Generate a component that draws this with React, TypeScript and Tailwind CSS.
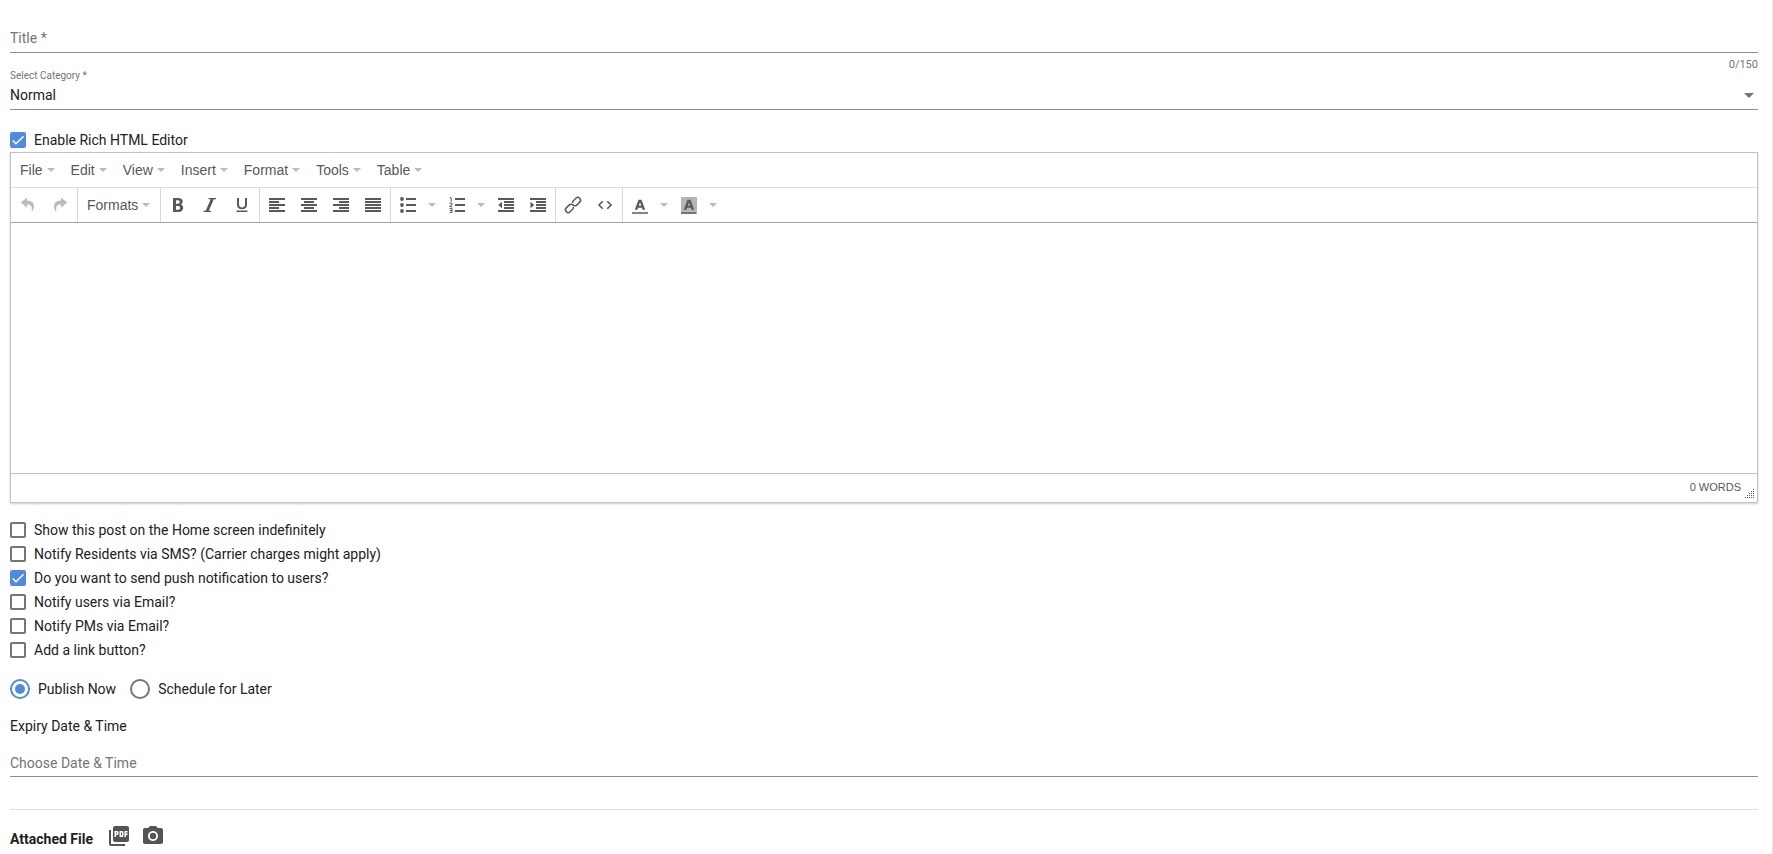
import { useState } from 'react';
import type { ReactNode } from 'react';
import { MdPhotoCamera, MdPictureAsPdf } from 'react-icons/md';

function Caret() {
  return (
    <svg viewBox="0 0 8 4" className="h-1 w-2 fill-[#b5bcc2]" aria-hidden="true">
      <path d="M0 0h8L4 4z" />
    </svg>
  );
}

function Glyph({ children }: { children: ReactNode }) {
  return (
    <svg viewBox="0 0 16 16" className="h-4 w-4 overflow-visible fill-[#595959]" aria-hidden="true">
      {children}
    </svg>
  );
}

function ToolButton({ label, dim = false, children }: { label: string; dim?: boolean; children: ReactNode }) {
  return (
    <button
      type="button"
      aria-label={label}
      disabled={dim}
      className={`flex h-8 w-8 items-center justify-center ${dim ? 'opacity-40' : ''}`}
    >
      <Glyph>{children}</Glyph>
    </button>
  );
}

function SplitButton({ label, children }: { label: string; children: ReactNode }) {
  return (
    <div className="flex">
      <ToolButton label={label}>{children}</ToolButton>
      <button type="button" aria-label={`${label} options`} className="flex w-[17px] items-center pl-1">
        <Caret />
      </button>
    </div>
  );
}

function MenuButton({ children }: { children: ReactNode }) {
  return (
    <button type="button" className="flex items-center gap-1 px-2 text-sm text-[#595959]">
      {children}
      <Caret />
    </button>
  );
}

function Group({ children }: { children: ReactNode }) {
  return <div className="flex items-center border-l border-[#d9d9d9] px-px first:border-l-0">{children}</div>;
}

function Check({ label, initial = false }: { label: string; initial?: boolean }) {
  const [on, setOn] = useState(initial);
  return (
    <label className="flex h-6 items-center gap-2">
      <span className="grid h-4 w-4">
        <input
          type="checkbox"
          checked={on}
          onChange={() => setOn(!on)}
          className="col-start-1 row-start-1 h-4 w-4 appearance-none rounded-xs border-2 border-[#757575] checked:border-[#4f8cde] checked:bg-[#4f8cde]"
        />
        {on && (
          <svg viewBox="0 0 24 24" className="pointer-events-none col-start-1 row-start-1 h-4 w-4" aria-hidden="true">
            <path d="M4.1 12.7 9 17.6 20.3 6.3" fill="none" stroke="white" strokeWidth="2.2" />
          </svg>
        )}
      </span>
      {label}
    </label>
  );
}

function Radio({ label, initial = false }: { label: string; initial?: boolean }) {
  return (
    <label className="flex items-center gap-2">
      <input
        type="radio"
        name="publish"
        defaultChecked={initial}
        className="h-5 w-5 appearance-none rounded-full border-2 border-[#757575] checked:border-[#4f8cde] checked:bg-[#4f8cde] checked:bg-clip-content checked:p-[3px]"
      />
      {label}
    </label>
  );
}

const menus = ['File', 'Edit', 'View', 'Insert', 'Format', 'Tools', 'Table'];

const options = [
  { label: 'Show this post on the Home screen indefinitely', on: false },
  { label: 'Notify Residents via SMS? (Carrier charges might apply)', on: false },
  { label: 'Do you want to send push notification to users?', on: true },
  { label: 'Notify users via Email?', on: false },
  { label: 'Notify PMs via Email?', on: false },
  { label: 'Add a link button?', on: false },
];

const letterA = 'M6.500 2.800h3l3.700 10h-2.600l-.7-2.100H6.100l-.7 2.100H2.800zM8 5.200 6.800 8.800h2.400z';

function Toolbar() {
  return (
    <div className="flex h-[35px] border-b border-[#a3a3a3]">
      <Group>
        <ToolButton label="Undo" dim>
          <path d="M7 .5.800 5.600 7 10.700V7.600c4.200-.1 5.800 2 4.400 7.400 4.600-5 3.200-11.200-4.400-11.400z" />
        </ToolButton>
        <ToolButton label="Redo" dim>
          <path d="M9 .5l6.200 5.100L9 10.700V7.600C4.800 7.500 3.200 9.600 4.600 15 0 10 1.400 3.800 9 3.600z" />
        </ToolButton>
      </Group>
      <Group>
        <div className="flex w-20">
          <MenuButton>Formats</MenuButton>
        </div>
      </Group>
      <Group>
        <ToolButton label="Bold">
          <path
            fillRule="evenodd"
            d="M3 1h5.500c2.700 0 4.200 1.400 4.200 3.500 0 1.400-.7 2.400-1.800 3 1.400.5 2.300 1.700 2.300 3.300 0 2.600-1.800 4.200-4.700 4.200H3zm3 2.300v3.400h1.800c1.200 0 1.900-.6 1.900-1.700S9 3.300 7.800 3.300zm0 5.600v3.800h2.100c1.300 0 2-.7 2-1.900s-.7-1.900-2-1.900z"
          />
        </ToolButton>
        <ToolButton label="Italic">
          <path d="M6.500 1H14v1.200h-2.200L6.800 13.800H9V15H1.500v-1.200h2.200l5-11.600H6.500z" />
        </ToolButton>
        <ToolButton label="Underline">
          <path d="M3 1h2v6.500C5 9.300 6.100 10.400 8 10.400s3-1.100 3-2.900V1h2v6.700c0 2.800-1.900 4.500-5 4.500S3 10.500 3 7.700zM2.500 13.500h11V15h-11z" />
        </ToolButton>
      </Group>
      <Group>
        <ToolButton label="Align left">
          <path d="M0 1h16v2H0zM0 4h10v2H0zM0 7h16v2H0zM0 10h10v2H0zM0 13h16v2H0z" />
        </ToolButton>
        <ToolButton label="Align center">
          <path d="M0 1h16v2H0zM3 4h10v2H3zM0 7h16v2H0zM3 10h10v2H3zM0 13h16v2H0z" />
        </ToolButton>
        <ToolButton label="Align right">
          <path d="M0 1h16v2H0zM6 4h10v2H6zM0 7h16v2H0zM6 10h10v2H6zM0 13h16v2H0z" />
        </ToolButton>
        <ToolButton label="Justify">
          <path d="M0 1h16v2H0zM0 4h16v2H0zM0 7h16v2H0zM0 10h16v2H0zM0 13h16v2H0z" />
        </ToolButton>
      </Group>
      <Group>
        <SplitButton label="Bullet list">
          <circle cx="2" cy="2" r="1.900" />
          <circle cx="2" cy="8" r="1.900" />
          <circle cx="2" cy="14" r="1.900" />
          <path d="M6 1h10v2H6zM6 7h10v2H6zM6 13h10v2H6z" />
        </SplitButton>
        <SplitButton label="Numbered list">
          <path d="M6 1h10v2H6zM6 7h10v2H6zM6 13h10v2H6z" />
          <path d="M.8.800H2.200v4M.5 6.200H3v1.600L.8 9.200v.6h2.500M.5 11.600H3v3.800H.5M.8 13.500H3" fill="none" stroke="#595959" />
        </SplitButton>
        <ToolButton label="Decrease indent">
          <path d="M0 1h16v2H0zM6 4h10v2H6zM6 7h10v2H6zM6 10h10v2H6zM0 13h16v2H0zM4 4.800v6.400L.3 8z" />
        </ToolButton>
        <ToolButton label="Increase indent">
          <path d="M0 1h16v2H0zM6 4h10v2H6zM6 7h10v2H6zM6 10h10v2H6zM0 13h16v2H0zM.5 4.800v6.400L4.200 8z" />
        </ToolButton>
      </Group>
      <Group>
        <ToolButton label="Insert link">
          <g transform="rotate(-45 8 8)" fill="none" stroke="#595959" strokeWidth="1.500">
            <path d="M6.800 9.500A2.700 2.700 0 0 1 5.500 10.700H1.200a2.700 2.700 0 0 1 0-5.400h4.300A2.700 2.700 0 0 1 8 8.500" />
            <path d="M9.200 6.500A2.700 2.700 0 0 1 10.500 5.300h4.300a2.700 2.700 0 0 1 0 5.400h-4.300A2.700 2.700 0 0 1 8 7.500" />
          </g>
        </ToolButton>
        <ToolButton label="Source code">
          <path d="M5.700 4.300 2 8l3.700 3.700M10.300 4.300 14 8l-3.700 3.700" fill="none" stroke="#595959" strokeWidth="1.600" />
        </ToolButton>
      </Group>
      <Group>
        <SplitButton label="Text color">
          <path fillRule="evenodd" d={letterA} />
          <path d="M0 15h16v2H0z" fill="#858585" />
        </SplitButton>
        <SplitButton label="Background color">
          <path d="M0 0h16v17H0z" fill="#b5b5b5" />
          <path fillRule="evenodd" d={letterA} />
          <path d="M0 15h15v2H0z" fill="#757575" />
        </SplitButton>
      </Group>
    </div>
  );
}

function Editor() {
  return (
    <section
      aria-label="Rich text editor"
      className="border border-[#c2c2c2] font-['Liberation_Sans',Arial,sans-serif] shadow-[0_1px_2px_rgba(0,0,0,0.2)]"
    >
      <div className="flex h-[35px] border-b border-[#dedede] pl-px">
        {menus.map((menu) => (
          <MenuButton key={menu}>{menu}</MenuButton>
        ))}
      </div>
      <Toolbar />
      <textarea aria-label="Post content" className="block h-[250px] w-full resize-none p-2 text-sm outline-none" />
      <div className="flex h-[29px] items-center justify-end gap-1 border-t border-[#c2c2c2] pr-0.5">
        <span className="text-[11px] text-[#595959] uppercase">0 words</span>
        <svg viewBox="0 0 10 10" className="mb-[3px] h-2.5 w-2.5 self-end" aria-hidden="true">
          <path
            d="M8 .5h1M6 2.500h1M8 2.500h1M4 4.500h1M6 4.500h1M8 4.500h1M2 6.500h1M4 6.500h1M6 6.500h1M8 6.500h1M0 8.500h1M2 8.500h1M4 8.500h1M6 8.500h1M8 8.500h1"
            stroke="#595959"
          />
        </svg>
      </div>
    </section>
  );
}

export default function App() {
  return (
    <main className="min-h-screen border-r border-[#e4e4e4] bg-white pt-6 pr-3.5 pl-2.5 font-[Roboto,sans-serif] text-sm text-[#212121]">
      <input
        aria-label="Title"
        placeholder="Title *"
        maxLength={150}
        className="block h-[29px] w-full border-b border-[#8c8c8c] outline-none placeholder:text-[#757575]"
      />
      <div className="mt-1.5 h-[11px] text-right text-[11px] leading-3 text-[#757575]">0/150</div>

      <label htmlFor="category" className="block text-[10px] leading-3 text-[#757575]">
        Select Category *
      </label>
      <div className="grid items-center border-b border-[#8c8c8c]">
        <select id="category" className="col-start-1 row-start-1 h-[27px] appearance-none pb-0.5 outline-none">
          <option>Normal</option>
        </select>
        <svg
          viewBox="0 0 10 5"
          className="pointer-events-none col-start-1 row-start-1 mr-1 h-[5px] w-2.5 justify-self-end fill-[#757575]"
          aria-hidden="true"
        >
          <path d="M0 0h10L5 5z" />
        </svg>
      </div>

      <div className="mt-[18px]">
        <Check label="Enable Rich HTML Editor" initial />
      </div>
      <Editor />

      <div className="mt-[15px]">
        {options.map((option) => (
          <Check key={option.label} label={option.label} initial={option.on} />
        ))}
      </div>

      <div className="mt-[17px] flex gap-3.5">
        <Radio label="Publish Now" initial />
        <Radio label="Schedule for Later" />
      </div>

      <label htmlFor="expiry" className="mt-[17px] block leading-5">
        Expiry Date &amp; Time
      </label>
      <input
        id="expiry"
        placeholder="Choose Date &amp; Time"
        className="mt-3.5 block h-[27px] w-full border-b border-[#8c8c8c] outline-none placeholder:text-[#757575]"
      />

      <hr className="mt-8 border-[#dedede]" />
      <div className="mt-3.5 flex items-start">
        <h2 className="pt-[5px] leading-5 font-bold">Attached File</h2>
        <div className="ml-3.5 flex gap-2.5 text-2xl text-[#545454]">
          <button type="button" aria-label="Attach PDF">
            <MdPictureAsPdf />
          </button>
          <button type="button" aria-label="Attach photo">
            <MdPhotoCamera />
          </button>
        </div>
      </div>
    </main>
  );
}
